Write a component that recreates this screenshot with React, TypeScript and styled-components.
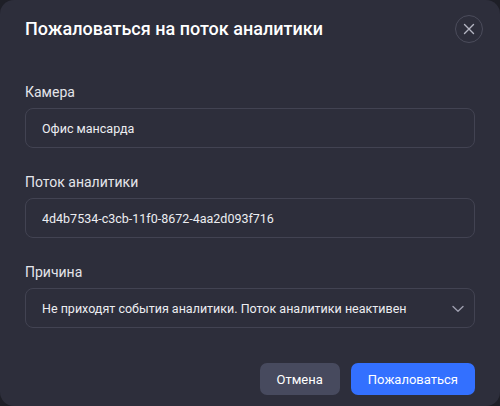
import React, { useState } from 'react';
import styled, { createGlobalStyle } from 'styled-components';

const GlobalStyle = createGlobalStyle`
  html, body {
    margin: 0;
    padding: 0;
    background: #1e1f27;
  }
  * {
    box-sizing: border-box;
  }
`;

const font = `'Segoe UI', Roboto, 'Noto Sans', sans-serif`;

const reasons = [
  'Не приходят события аналитики. Поток аналитики неактивен',
  'Неверные события аналитики',
  'Другое',
];

export default function App() {
  const [reason, setReason] = useState(reasons[0]);

  return (
    <>
      <GlobalStyle />
      <Dialog>
        <Header>
          <Title>Пожаловаться на поток аналитики</Title>
          <CloseButton aria-label="Закрыть">
            <svg width="12" height="12" viewBox="0 0 12 12">
              <path
                d="M1.5 1.5 L10.5 10.5 M10.5 1.5 L1.5 10.5"
                stroke="#b4b5c2"
                strokeWidth="1.4"
                strokeLinecap="round"
              />
            </svg>
          </CloseButton>
        </Header>
        <Form>
          <Field>
            <Label>Камера</Label>
            <Input readOnly value="Офис мансарда" />
          </Field>
          <Field>
            <Label>Поток аналитики</Label>
            <Input readOnly value="4d4b7534-c3cb-11f0-8672-4aa2d093f716" />
          </Field>
          <Field>
            <Label>Причина</Label>
            <SelectWrap>
              <Select value={reason} onChange={(e) => setReason(e.target.value)}>
                {reasons.map((r) => (
                  <option key={r} value={r}>
                    {r}
                  </option>
                ))}
              </Select>
              <Chevron width="12" height="8" viewBox="0 0 12 8">
                <path
                  d="M1 1.5 L6 6.2 L11 1.5"
                  fill="none"
                  stroke="#9d9eae"
                  strokeWidth="1.4"
                  strokeLinecap="round"
                  strokeLinejoin="round"
                />
              </Chevron>
            </SelectWrap>
          </Field>
        </Form>
        <Footer>
          <Button>Отмена</Button>
          <Button primary>Пожаловаться</Button>
        </Footer>
      </Dialog>
    </>
  );
}

const Dialog = styled.div`
  width: 500px;
  height: 406px;
  padding: 15px 17px 11px 25px;
  background: #2d2e3b;
  border-radius: 14px;
  display: flex;
  flex-direction: column;
  font-family: ${font};
`;

const Header = styled.div`
  display: flex;
  align-items: center;
  justify-content: space-between;
  height: 28px;
`;

const Title = styled.h2`
  margin: 0;
  color: #ffffff;
  font-size: 18px;
  font-weight: 500;
  line-height: 28px;
`;

const CloseButton = styled.button`
  width: 28px;
  height: 28px;
  padding: 0;
  border-radius: 50%;
  border: 1px solid #4b4c5b;
  background: transparent;
  display: flex;
  align-items: center;
  justify-content: center;
  cursor: pointer;
`;

const Form = styled.div`
  display: flex;
  flex-direction: column;
  gap: 24px;
  margin-top: 39px;
  margin-right: 8px;
`;

const Field = styled.div`
  display: flex;
  flex-direction: column;
  gap: 6px;
`;

const Label = styled.label`
  color: #e4e5ea;
  font-size: 14px;
  line-height: 20px;
`;

const Input = styled.input`
  height: 40px;
  width: 100%;
  padding: 0 16px;
  border: 1px solid #424352;
  border-radius: 8px;
  background: transparent;
  color: #ecedf1;
  font-family: ${font};
  font-size: 12.5px;
  outline: none;
`;

const SelectWrap = styled.div`
  position: relative;
`;

const Select = styled.select`
  appearance: none;
  height: 40px;
  width: 100%;
  padding: 0 40px 0 16px;
  border: 1px solid #424352;
  border-radius: 8px;
  background: transparent;
  color: #ecedf1;
  font-family: ${font};
  font-size: 12.5px;
  outline: none;

  option {
    background: #2d2e3b;
  }
`;

const Chevron = styled.svg`
  position: absolute;
  right: 11px;
  top: 17px;
  pointer-events: none;
`;

const Footer = styled.div`
  margin-top: auto;
  margin-right: 8px;
  display: flex;
  justify-content: flex-end;
  gap: 11px;
`;

const Button = styled.button<{ primary?: boolean }>`
  height: 32px;
  padding: 0 17px;
  border: none;
  border-radius: 7px;
  background: ${(p) => (p.primary ? '#3370ff' : '#474a5e')};
  color: #ffffff;
  font-family: ${font};
  font-size: 13px;
  cursor: pointer;
`;
